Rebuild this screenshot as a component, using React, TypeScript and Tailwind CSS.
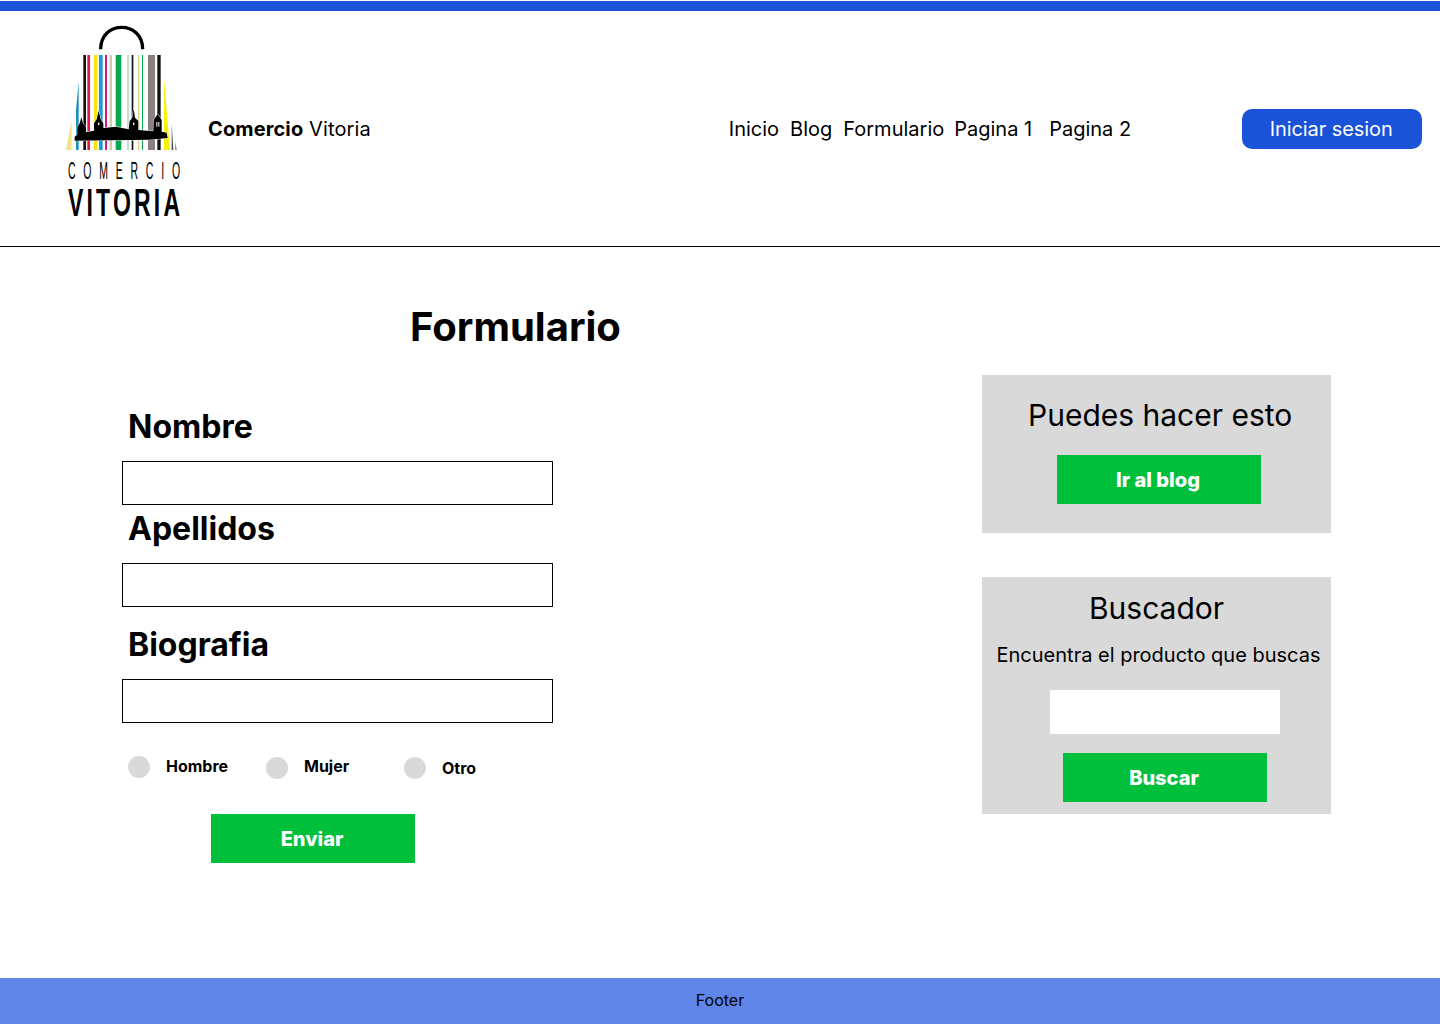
import React from 'react';

const stripes: [number, number, string][] = [
  [100, 8, '#111111'],
  [112, 8, '#e8173f'],
  [132, 10, '#f5e50a'],
  [147, 11, '#1b9ad6'],
  [165, 6, '#d8127f'],
  [179, 7, '#cfc9ac'],
  [197, 17, '#0aa64f'],
  [231, 7, '#c9ded6'],
  [245, 5, '#111111'],
  [264, 4, '#d6d28a'],
  [276, 3, '#0aa64f'],
  [294, 21, '#8a8080'],
  [322, 10, '#111111'],
];

const Logo = () => (
  <svg width="150" height="220" viewBox="0 3 450 660" className="shrink-0 self-start overflow-visible">
    <path d="M152 118 C152 30 278 30 278 118" fill="none" stroke="#000" strokeWidth="10" />
    {stripes.map(([x, w, color]) => (
      <rect key={x} x={x} y={135} width={w} height={285} fill={color} />
    ))}
    <polygon points="86,215 78,300 78,420 86,420" fill="#1b8fc0" />
    <polygon points="65,330 48,420 65,420" fill="#efe28a" />
    <polygon points="342,205 360,420 342,420" fill="#f7f00a" />
    <polygon points="365,340 370,420 365,420" fill="#444444" />
    <polygon points="375,395 381,420 375,420" fill="#b58fb0" />
    <path
      d="M74 392 L74 380 L82 374 L82 352 L89 340 L94 322 L99 340 L108 352 L108 366 L132 362 L132 340 L140 328 L146 302 L152 328 L160 340 L160 354 L198 350 L236 358 L239 333 L247 323 L251 295 L255 323 L265 333 L265 360 L310 364 L311 330 L323 312 L335 330 L335 365 L350 368 L353 384 L298 389 Z"
      fill="#000"
      stroke="#fff"
      strokeWidth="3"
      paintOrder="stroke"
    />
    <rect x="144" y="338" width="4" height="7" fill="#fff" />
    <rect x="249" y="338" width="4" height="7" fill="#fff" />
    <rect x="319" y="336" width="3" height="14" fill="#fff" />
    <rect x="325" y="336" width="3" height="14" fill="#fff" />
    <g transform="translate(54 507) scale(0.45 1)">
      <text fontFamily="'Liberation Sans', sans-serif" fontSize="70" textLength="747" lengthAdjust="spacing" fill="#000">
        COMERCIO
      </text>
    </g>
    <g transform="translate(54 618) scale(0.6 1)">
      <text fontFamily="'Liberation Sans', sans-serif" fontSize="115" fontWeight="700" textLength="560" lengthAdjust="spacing" fill="#000">
        VITORIA
      </text>
    </g>
  </svg>
);

const Field = ({ label, top }: { label: string; top: string }) => (
  <div className={top}>
    <label className="block pl-[6px] text-[32px] leading-[41px] font-bold text-black">{label}</label>
    <input type="text" className="mt-[14px] block h-[44px] w-[431px] border border-black bg-white" />
  </div>
);

const GreenButton = ({ children, className }: { children: React.ReactNode; className?: string }) => (
  <button className={`block h-[49px] w-[204px] bg-[#00c03b] pr-[2px] text-[20px] font-extrabold text-white ${className ?? ''}`}>
    {children}
  </button>
);

const Radio = ({ label, dot, text }: { label: string; dot?: string; text?: string }) => (
  <div className="flex w-[138px] items-center">
    <span className={`h-[22px] w-[22px] rounded-full bg-[#d9d9d9] ${dot ?? ''}`} />
    <span className={`ml-4 text-[16px] leading-[19px] font-bold text-black ${text ?? ''}`}>{label}</span>
  </div>
);

export default function App() {
  return (
    <div className="flex min-h-[1024px] flex-col bg-white font-['Inter',sans-serif] text-black">
      <div className="mt-px h-[10px] bg-[#1a52d8]" />

      <header className="flex h-[236px] items-center border-b border-black pl-[50px]">
        <Logo />
        <div className="ml-2 text-[20px] tracking-[0.12px]">
          <span className="font-bold">Comercio</span> Vitoria
        </div>
        <nav className="ml-[358px] flex text-[20px]">
          <a className="mr-[11px]">Inicio</a>
          <a className="mr-[11px]">Blog</a>
          <a className="mr-[10px]">Formulario</a>
          <a className="mr-[17px]">Pagina 1</a>
          <a>Pagina 2</a>
        </nav>
        <button className="ml-[111px] h-[40px] w-[180px] rounded-[10px] bg-[#1a52d8] pr-[2px] text-[20px] tracking-[-0.08px] text-white">
          Iniciar sesion
        </button>
      </header>

      <main className="flex pl-[122px]">
        <div className="w-[431px] pt-[56px]">
          <h1 className="pl-[288px] text-[40px] leading-[48px] font-bold whitespace-nowrap">Formulario</h1>
          <Field label="Nombre" top="mt-[55px]" />
          <Field label="Apellidos" top="mt-[3px]" />
          <Field label="Biografia" top="mt-[17px]" />
          <div className="mt-[32px] flex pl-[6px]">
            <Radio label="Hombre" text="mb-[2px]" />
            <Radio label="Mujer" dot="mt-[2px]" text="mb-[2px]" />
            <Radio label="Otro" dot="mt-[2px]" text="mt-[2px]" />
          </div>
          <GreenButton className="mt-[35px] ml-[89px]">Enviar</GreenButton>
        </div>

        <aside className="ml-[429px] w-[349px] pt-[128px]">
          <section className="h-[158px] bg-[#d9d9d9] pt-[20px]">
            <h2 className="pl-[46px] text-[30px] leading-[40px] whitespace-nowrap">Puedes hacer esto</h2>
            <GreenButton className="mt-5 ml-[75px]">Ir al blog</GreenButton>
          </section>
          <section className="mt-[44px] h-[237px] bg-[#d9d9d9] pt-[11px]">
            <h2 className="text-center text-[30px] leading-[40px]">Buscador</h2>
            <p className="mt-[15px] pl-1 text-center text-[20px] leading-[24px] whitespace-nowrap">
              Encuentra el producto que buscas
            </p>
            <input type="text" className="mt-[23px] ml-[68px] block h-[44px] w-[230px] bg-white" />
            <GreenButton className="mt-[19px] ml-[81px]">Buscar</GreenButton>
          </section>
        </aside>
      </main>

      <footer className="mt-auto flex h-[46px] items-center justify-center bg-[#5f85e8] pb-[2px] text-[16px]">Footer</footer>
    </div>
  );
}
